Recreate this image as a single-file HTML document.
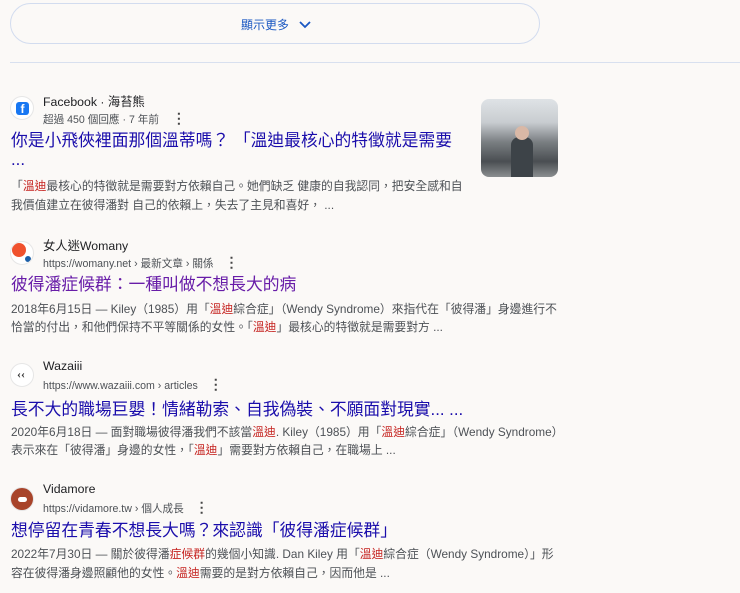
<!DOCTYPE html>
<html><head><meta charset="utf-8"><style>
body{margin:0;width:740px;height:593px;background:#fbf9f7;font-family:"Liberation Sans","Noto Sans CJK TC",sans-serif;position:relative;overflow:hidden}
.a{position:absolute;white-space:nowrap}
.btn{position:absolute;left:10px;top:3px;width:530px;height:41px;border:1px solid #d2dcef;border-radius:21px;box-sizing:border-box}
.btn span{position:absolute;left:230px;top:12px;font-size:12px;color:#1a57c2}
.hr{position:absolute;left:10px;top:62px;width:730px;height:1px;background:#d8e0ef}
.fav{position:absolute;width:24px;height:24px;border-radius:50%;background:#fff;border:1px solid #e6e6e6;box-sizing:border-box;overflow:hidden}
.nm{font-size:12.3px;color:#202124}
.url{font-size:10.6px;color:#4d5156}
.dots{font-size:14px;color:#444;font-weight:bold}
.t{font-size:16.8px;color:#1a0dab}
.v{color:#681da8}
.s{font-size:11.8px;color:#4d5156}
.r{color:#c5221f}
</style></head><body>
<div class="btn"><span>顯示更多 <svg width="14" height="10" viewBox="0 0 14 10" style="vertical-align:-1px;margin-left:6px"><path d="M2 2l5 5 5-5" fill="none" stroke="#1a57c2" stroke-width="1.8"/></svg></span></div>
<div class="hr"></div>

<div class="fav" style="left:10px;top:96px"><div style="position:absolute;left:5px;top:5px;width:13px;height:13px;border-radius:3px;background:#1877f2;color:#fff;font-weight:bold;font-size:12px;line-height:15px;text-align:center">f</div></div>
<div class="a nm" style="left:43px;top:92px">Facebook · 海苔熊</div>
<div class="a url" style="left:43px;top:110px">超過 450 個回應 · 7 年前 <span class="dots" style="margin-left:10px">⋮</span></div>
<div class="a t" style="left:11px;top:127px">你是小飛俠裡面那個溫蒂嗎？ 「溫迪最核心的特徵就是需要</div>
<div class="a t" style="left:11px;top:150px">...</div>
<div class="a s" style="left:11px;top:177px">「<span class="r">溫迪</span>最核心的特徵就是需要對方依賴自己。她們缺乏 健康的自我認同，把安全感和自</div>
<div class="a s" style="left:11px;top:196px">我價值建立在彼得潘對 自己的依賴上，失去了主見和喜好， ...</div>
<div style="position:absolute;left:481px;top:99px;width:77px;height:78px;border-radius:8px;background:linear-gradient(180deg,#dfe3e6 0%,#c8ccd0 30%,#7a7f82 55%,#4a4e52 80%,#8a8e90 100%)"><div style="position:absolute;left:30px;top:38px;width:22px;height:40px;border-radius:8px 8px 0 0;background:#3d4348"></div><div style="position:absolute;left:34px;top:27px;width:14px;height:14px;border-radius:50%;background:#d9b8a6"></div></div>

<div class="fav" style="left:10px;top:241px"><div style="position:absolute;left:1px;top:1px;width:14px;height:14px;border-radius:50%;background:#f0522e"></div><div style="position:absolute;left:14px;top:14px;width:6px;height:6px;border-radius:50%;background:#1b5fa8"></div></div>
<div class="a nm" style="left:43px;top:236px">女人迷Womany</div>
<div class="a url" style="left:43px;top:254px">https://womany.net › 最新文章 › 關係 <span class="dots" style="margin-left:8px">⋮</span></div>
<div class="a t v" style="left:11px;top:271px">彼得潘症候群：一種叫做不想長大的病</div>
<div class="a s" style="left:11px;top:300px">2018年6月15日 — Kiley（1985）用「<span class="r">溫迪</span>綜合症」（Wendy Syndrome）來指代在「彼得潘」身邊進行不</div>
<div class="a s" style="left:11px;top:318px">恰當的付出，和他們保持不平等關係的女性。「<span class="r">溫迪</span>」最核心的特徵就是需要對方 ...</div>

<div class="fav" style="left:10px;top:363px"><div style="position:absolute;left:6px;top:3px;font-size:12px;font-weight:bold;color:#333;font-family:'Liberation Serif',serif">‹‹</div></div>
<div class="a nm" style="left:43px;top:359px">Wazaiii</div>
<div class="a url" style="left:43px;top:376px">https://www.wazaiii.com › articles <span class="dots" style="margin-left:8px">⋮</span></div>
<div class="a t" style="left:11px;top:396px">長不大的職場巨嬰！情緒勒索、自我偽裝、不願面對現實... ...</div>
<div class="a s" style="left:11px;top:423px">2020年6月18日 — 面對職場彼得潘我們不該當<span class="r">溫迪</span>. Kiley（1985）用「<span class="r">溫迪</span>綜合症」（Wendy Syndrome）</div>
<div class="a s" style="left:11px;top:441px">表示來在「彼得潘」身邊的女性，「<span class="r">溫迪</span>」需要對方依賴自己，在職場上 ...</div>

<div class="fav" style="left:10px;top:487px;background:#a8442a;border-color:#e6e6e6"><div style="position:absolute;left:7px;top:9px;width:9px;height:5px;border-radius:3px;background:#fff"></div></div>
<div class="a nm" style="left:43px;top:482px">Vidamore</div>
<div class="a url" style="left:43px;top:499px">https://vidamore.tw › 個人成長 <span class="dots" style="margin-left:8px">⋮</span></div>
<div class="a t" style="left:11px;top:517px">想停留在青春不想長大嗎？來認識「彼得潘症候群」</div>
<div class="a s" style="left:11px;top:545px">2022年7月30日 — 關於彼得潘<span class="r">症候群</span>的幾個小知識. Dan Kiley 用「<span class="r">溫迪</span>綜合症（Wendy Syndrome）」形</div>
<div class="a s" style="left:11px;top:564px">容在彼得潘身邊照顧他的女性。<span class="r">溫迪</span>需要的是對方依賴自己，因而他是 ...</div>
</body></html>
